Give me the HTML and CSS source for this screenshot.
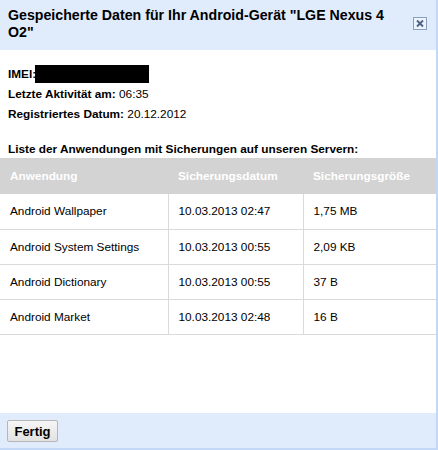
FILE: index.html
```html
<!DOCTYPE html>
<html lang="de">
<head>
<meta charset="utf-8">
<title>Gespeicherte Daten</title>
<link rel="stylesheet" href="styles.css">
</head>
<body>
<div class="dialog">
  <div class="dlg-head">
    <div class="dlg-title">Gespeicherte Daten für Ihr Android-Gerät "LGE Nexus 4 O2"</div>
    <button class="dlg-close" aria-label="Schließen">
      <svg width="14" height="13" viewBox="0 0 14 13">
        <rect x="0.5" y="0.5" width="13" height="12" fill="#eef4fd" stroke="#8a9fbd"/>
        <path d="M4 3.5 L10 9.5 M10 3.5 L4 9.5" stroke="#4d6288" stroke-width="1.9" fill="none"/>
      </svg>
    </button>
  </div>
  <div class="dlg-body">
    <div class="info">
      <div class="info-line"><b>IMEI:</b><span class="redact"></span></div>
      <div class="info-line"><b>Letzte Aktivität am:</b> 06:35</div>
      <div class="info-line"><b>Registriertes Datum:</b> 20.12.2012</div>
      <div class="info-line list-title"><b>Liste der Anwendungen mit Sicherungen auf unseren Servern:</b></div>
    </div>
    <table class="apps">
      <thead>
        <tr><th class="c1">Anwendung</th><th class="c2">Sicherungsdatum</th><th class="c3">Sicherungsgröße</th></tr>
      </thead>
      <tbody>
        <tr><td>Android Wallpaper</td><td>10.03.2013 02:47</td><td>1,75 MB</td></tr>
        <tr><td>Android System Settings</td><td>10.03.2013 00:55</td><td>2,09 KB</td></tr>
        <tr><td>Android Dictionary</td><td>10.03.2013 00:55</td><td>37 B</td></tr>
        <tr><td>Android Market</td><td>10.03.2013 02:48</td><td>16 B</td></tr>
      </tbody>
    </table>
  </div>
  <div class="dlg-foot">
    <button class="btn">Fertig</button>
  </div>
</div>
</body>
</html>
```
FILE: styles.css
```css
html, body {
  margin: 0;
  padding: 0;
  background: #ffffff;
}
body {
  font-family: "Liberation Sans", Arial, sans-serif;
  font-size: 11.8px;
  color: #000;
}
.dialog {
  width: 436px;
  height: 448px;
  border-right: 2px solid #c3d7f7;
  border-bottom: 2px solid #c3d7f7;
  display: flex;
  flex-direction: column;
  background: #fff;
}
.dlg-head {
  height: 50px;
  box-sizing: border-box;
  background: #e0ecfc;
  display: flex;
  align-items: flex-start;
  padding: 7px 9px 0 8px;
}
.dlg-title {
  flex: 1;
  font-size: 14.2px;
  font-weight: bold;
  line-height: 17px;
  padding-right: 14px;
}
.dlg-close {
  margin: 10px 0 0 0;
  padding: 0;
  border: 0;
  background: none;
  width: 14px;
  height: 13px;
  display: block;
}
.dlg-close svg {
  display: block;
}
.dlg-body {
  flex: 1;
  padding-top: 14px;
}
.info {
  padding: 0 8px;
}
.info-line {
  line-height: 20px;
  height: 20px;
}
.redact {
  display: inline-block;
  width: 114px;
  height: 18px;
  background: #000;
  vertical-align: -5px;
  margin-left: -1px;
}
.list-title {
  margin-top: 15px;
}
.apps {
  width: 436px;
  border-collapse: collapse;
  margin-top: -1px;
}
.apps th {
  background: #d3d3d3;
  color: #fff;
  font-weight: bold;
  text-align: left;
  height: 36px;
  padding: 0 10px;
  box-sizing: border-box;
}
.apps th.c1 { width: 168px; }
.apps th.c2 { width: 135px; }
.apps td {
  height: 35px;
  padding: 0 10px;
  box-sizing: border-box;
  border-bottom: 1px solid #dadada;
  border-left: 1px solid #dadada;
}
.apps td:first-child {
  border-left: 0;
}
.dlg-foot {
  height: 35px;
  background: #e0ecfc;
  display: flex;
  align-items: center;
  padding-left: 7px;
}
.btn {
  font-family: "Liberation Sans", Arial, sans-serif;
  font-size: 13px;
  font-weight: bold;
  color: #000;
  width: 51px;
  height: 22px;
  padding: 0;
  border: 1px solid #b6b6b6;
  border-radius: 2px;
  background: linear-gradient(#f6f6f6, #e2e2e2);
  margin-top: 1px;
}
```
